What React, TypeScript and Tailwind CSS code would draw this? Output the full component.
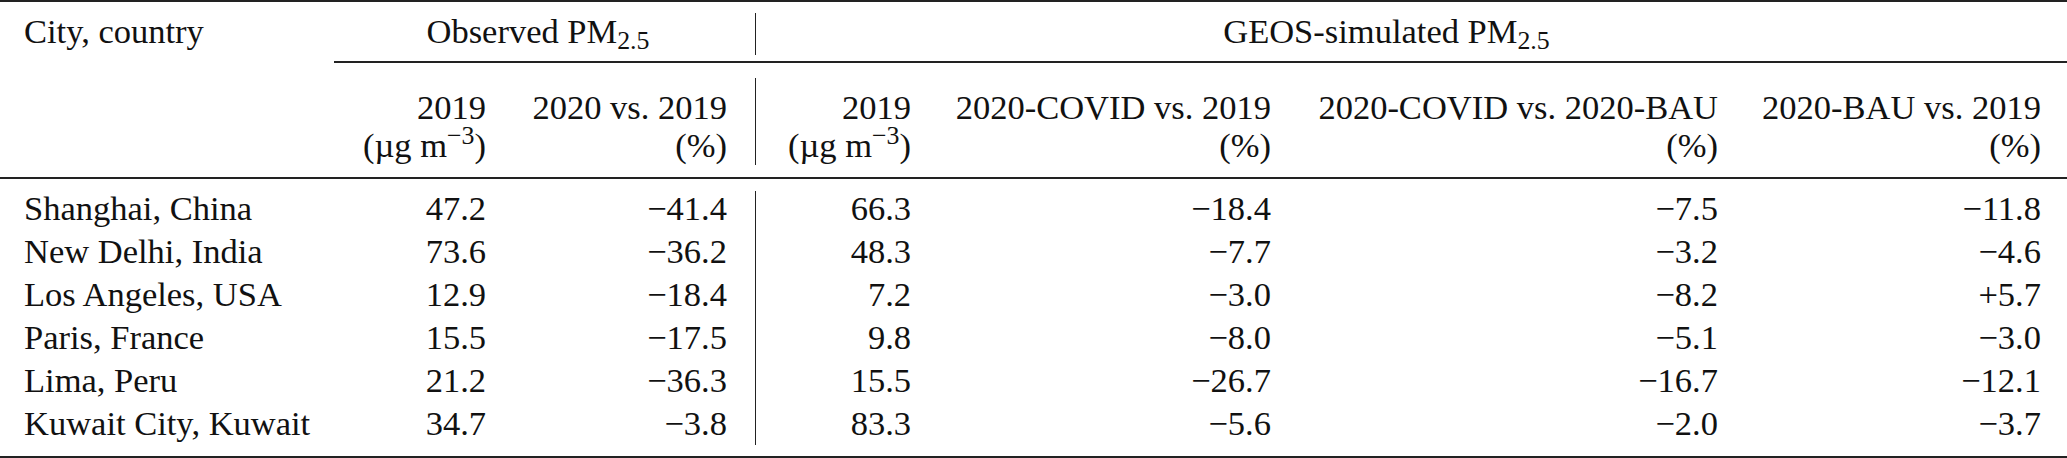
import React from 'react';

interface CityRow {
    city: string;
    obs2019: string;
    obsChange: string;
    sim2019: string;
    covidVs2019: string;
    covidVsBau: string;
    bauVs2019: string;
}

const rows: CityRow[] = [
    { city: 'Shanghai, China', obs2019: '47.2', obsChange: '−41.4', sim2019: '66.3', covidVs2019: '−18.4', covidVsBau: '−7.5', bauVs2019: '−11.8' },
    { city: 'New Delhi, India', obs2019: '73.6', obsChange: '−36.2', sim2019: '48.3', covidVs2019: '−7.7', covidVsBau: '−3.2', bauVs2019: '−4.6' },
    { city: 'Los Angeles, USA', obs2019: '12.9', obsChange: '−18.4', sim2019: '7.2', covidVs2019: '−3.0', covidVsBau: '−8.2', bauVs2019: '+5.7' },
    { city: 'Paris, France', obs2019: '15.5', obsChange: '−17.5', sim2019: '9.8', covidVs2019: '−8.0', covidVsBau: '−5.1', bauVs2019: '−3.0' },
    { city: 'Lima, Peru', obs2019: '21.2', obsChange: '−36.3', sim2019: '15.5', covidVs2019: '−26.7', covidVsBau: '−16.7', bauVs2019: '−12.1' },
    { city: 'Kuwait City, Kuwait', obs2019: '34.7', obsChange: '−3.8', sim2019: '83.3', covidVs2019: '−5.6', covidVsBau: '−2.0', bauVs2019: '−3.7' },
];

// column widths / right paddings taken from the reference
const col1 = 'w-[334px] shrink-0 pl-[24px]';
const col2 = 'w-[176px] shrink-0 pr-[24px] text-right';
const col3 = 'w-[245px] shrink-0 pr-[28px] text-right';
const col4 = 'w-[179px] shrink-0 pr-[23px] text-right border-l-[1.5px] border-[#222]';
const col5 = 'w-[361px] shrink-0 pr-[24px] text-right';
const col6 = 'w-[447px] shrink-0 pr-[24px] text-right';
const col7 = 'flex-1 pr-[26px] text-right';

const Unit = () => (
    <>
        (µg m<sup>−3</sup>)
    </>
);

const App: React.FC = () => {
    return (
        <div className="w-[2067px] h-[458px] bg-white text-[#111] font-['Liberation_Serif','Times_New_Roman',serif] text-[34.5px]">
            {/* top rule */}
            <div className="h-[2px] bg-[#222]" />

            {/* header row 1 */}
            <div className="mt-[11px] flex h-[42px] leading-[37px]">
                <div className={col1}>City, country</div>
                <div className="w-[421px] shrink-0 pr-[13px] text-center">
                    Observed PM<sub>2.5</sub>
                </div>
                <div className="flex-1 border-l-[1.5px] border-[#222] pr-[50px] text-center">
                    GEOS-simulated PM<sub>2.5</sub>
                </div>
            </div>

            {/* cmidrule */}
            <div className="mt-[6px] ml-[334px] h-[2px] bg-[#222]" />

            {/* header row 2 */}
            <div className="mt-[15px] flex h-[87px] leading-[38px]">
                <div className={col1} />
                <div className={`${col2} pt-[10px]`}>
                    <div>2019</div>
                    <div><Unit /></div>
                </div>
                <div className={`${col3} pt-[10px]`}>
                    <div>2020 vs. 2019</div>
                    <div>(%)</div>
                </div>
                <div className={`${col4} pt-[10px]`}>
                    <div>2019</div>
                    <div><Unit /></div>
                </div>
                <div className={`${col5} pt-[10px]`}>
                    <div>2020-COVID vs. 2019</div>
                    <div>(%)</div>
                </div>
                <div className={`${col6} pt-[10px]`}>
                    <div>2020-COVID vs. 2020-BAU</div>
                    <div>(%)</div>
                </div>
                <div className={`${col7} pt-[10px]`}>
                    <div>2020-BAU vs. 2019</div>
                    <div>(%)</div>
                </div>
            </div>

            {/* midrule */}
            <div className="mt-[12px] h-[1.5px] bg-[#222]" />

            {/* body */}
            <div className="mt-[12px] flex h-[254px] leading-[43px]">
                <div className={col1}>
                    <div className="-mt-[4px]">
                        {rows.map(r => <div key={r.city}>{r.city}</div>)}
                    </div>
                </div>
                <div className={col2}>
                    <div className="-mt-[4px]">
                        {rows.map(r => <div key={r.city}>{r.obs2019}</div>)}
                    </div>
                </div>
                <div className={col3}>
                    <div className="-mt-[4px]">
                        {rows.map(r => <div key={r.city}>{r.obsChange}</div>)}
                    </div>
                </div>
                <div className={col4}>
                    <div className="-mt-[4px]">
                        {rows.map(r => <div key={r.city}>{r.sim2019}</div>)}
                    </div>
                </div>
                <div className={col5}>
                    <div className="-mt-[4px]">
                        {rows.map(r => <div key={r.city}>{r.covidVs2019}</div>)}
                    </div>
                </div>
                <div className={col6}>
                    <div className="-mt-[4px]">
                        {rows.map(r => <div key={r.city}>{r.covidVsBau}</div>)}
                    </div>
                </div>
                <div className={col7}>
                    <div className="-mt-[4px]">
                        {rows.map(r => <div key={r.city}>{r.bauVs2019}</div>)}
                    </div>
                </div>
            </div>

            {/* bottom rule */}
            <div className="mt-[11px] h-[2px] bg-[#222]" />
        </div>
    );
};

export default App;
